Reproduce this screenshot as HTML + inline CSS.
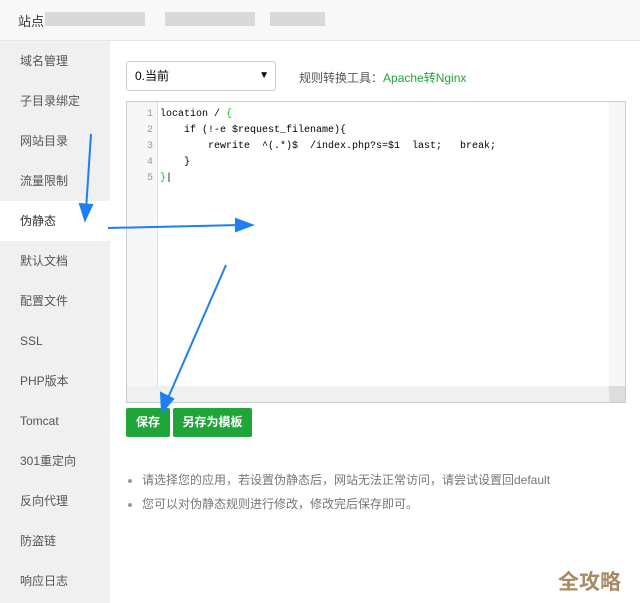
<!DOCTYPE html>
<html><head><meta charset="utf-8"><style>
body{margin:0;width:640px;height:603px;position:relative;overflow:hidden;font-family:"Liberation Sans","Noto Sans CJK SC",sans-serif;background:#fff}
.hd{position:absolute;left:0;top:0;width:640px;height:40px;background:#f8f8f8;border-bottom:1px solid #e5e5e5}
.hd span{position:absolute;left:18px;top:11px;font-size:13px;color:#333}
.blur{position:absolute;top:12px;height:14px;background:#ccc;opacity:.7}
.sb{position:absolute;left:0;top:41px;width:110px;height:562px;background:#f0f0f0}
.sb div{height:40px;line-height:40px;padding-left:20px;font-size:12px;color:#555}
.sb .on{background:#fff;color:#333}
.sel{position:absolute;left:126px;top:61px;border:1px solid #ccc;border-radius:3px;font-size:12px;line-height:28px;padding-left:8px;box-sizing:border-box;width:150px;height:30px}
.sel i{position:absolute;right:6px;top:0;font-style:normal;font-size:10px}
.tool{position:absolute;left:299px;top:69px;font-size:12px;color:#555}
.tool b{font-weight:normal;color:#20a53a}
.ed{position:absolute;left:126px;top:101px;width:500px;height:302px;border:1px solid #ccc;box-sizing:border-box;background:#fff}
.gut{position:absolute;left:0;top:0;width:30px;height:284px;background:#f7f7f7;border-right:1px solid #ddd}
.ln{position:absolute;left:0;width:26px;text-align:right;font:10px "Liberation Mono",monospace;color:#999}
.cd{position:absolute;left:33px;font:10px "Liberation Mono",monospace;color:#000;white-space:pre}
.vs{position:absolute;right:0;top:0;width:16px;height:284px;background:#f7f7f7}
.hs{position:absolute;left:0;bottom:0;width:482px;height:16px;background:#f0f0f0}
.cn{position:absolute;right:0;bottom:0;width:16px;height:16px;background:#ddd}
.btn{position:absolute;top:408px;height:29px;line-height:29px;background:#20a53a;color:#fff;font-size:12px;font-weight:bold;border-radius:2px;text-align:center}
ul{position:absolute;left:124px;top:471px;margin:0;padding-left:18px;font-size:12px;color:#777}
li{height:24px;line-height:18px}
li::marker{color:#999}
.wm{position:absolute;left:558px;top:566px;font-size:21px;font-weight:bold;color:#a88a64}
</style></head><body>
<div class="hd"><span>站点</span>
<div class="blur" style="left:45px;width:100px"></div><div class="blur" style="left:165px;width:90px"></div><div class="blur" style="left:270px;width:55px"></div></div>
<div class="sb"><div>域名管理</div><div>子目录绑定</div><div>网站目录</div><div>流量限制</div><div class="on">伪静态</div><div>默认文档</div><div>配置文件</div><div>SSL</div><div>PHP版本</div><div>Tomcat</div><div>301重定向</div><div>反向代理</div><div>防盗链</div><div>响应日志</div></div>
<div class="sel">0.当前<i>▼</i></div>
<div class="tool">规则转换工具：<b>Apache转Nginx</b></div>
<div class="ed"><div class="gut"></div>
<div class="ln" style="top:7px">1</div><div class="ln" style="top:23px">2</div><div class="ln" style="top:39px">3</div><div class="ln" style="top:55px">4</div><div class="ln" style="top:71px">5</div>
<div class="cd" style="top:7px">location / <span style="color:#0c0">{</span></div>
<div class="cd" style="top:23px">    if (!-e $request_filename){</div>
<div class="cd" style="top:39px">        rewrite  ^(.*)$  /index.php?s=$1  last;   break;</div>
<div class="cd" style="top:55px">    }</div>
<div class="cd" style="top:71px"><span style="color:#0c0">}</span>|</div>
<div class="vs"></div><div class="hs"></div><div class="cn"></div></div>
<div class="btn" style="left:126px;width:44px">保存</div>
<div class="btn" style="left:173px;width:79px">另存为模板</div>
<ul><li>请选择您的应用，若设置伪静态后，网站无法正常访问，请尝试设置回default</li><li>您可以对伪静态规则进行修改，修改完后保存即可。</li></ul>
<div class="wm">全攻略</div>
<svg style="position:absolute;left:0;top:0" width="640" height="603">
<g stroke="#1e7ff0" stroke-width="2" fill="#1e7ff0">
<line x1="91" y1="134" x2="86" y2="210"/><polygon points="80,204 92,205 85,220"/>
<line x1="108" y1="228" x2="240" y2="225"/><polygon points="236,219 252,225 236,231"/>
<line x1="226" y1="265" x2="168" y2="398"/><polygon points="161,393 173,399 162,412"/>
</g></svg>
</body></html>
